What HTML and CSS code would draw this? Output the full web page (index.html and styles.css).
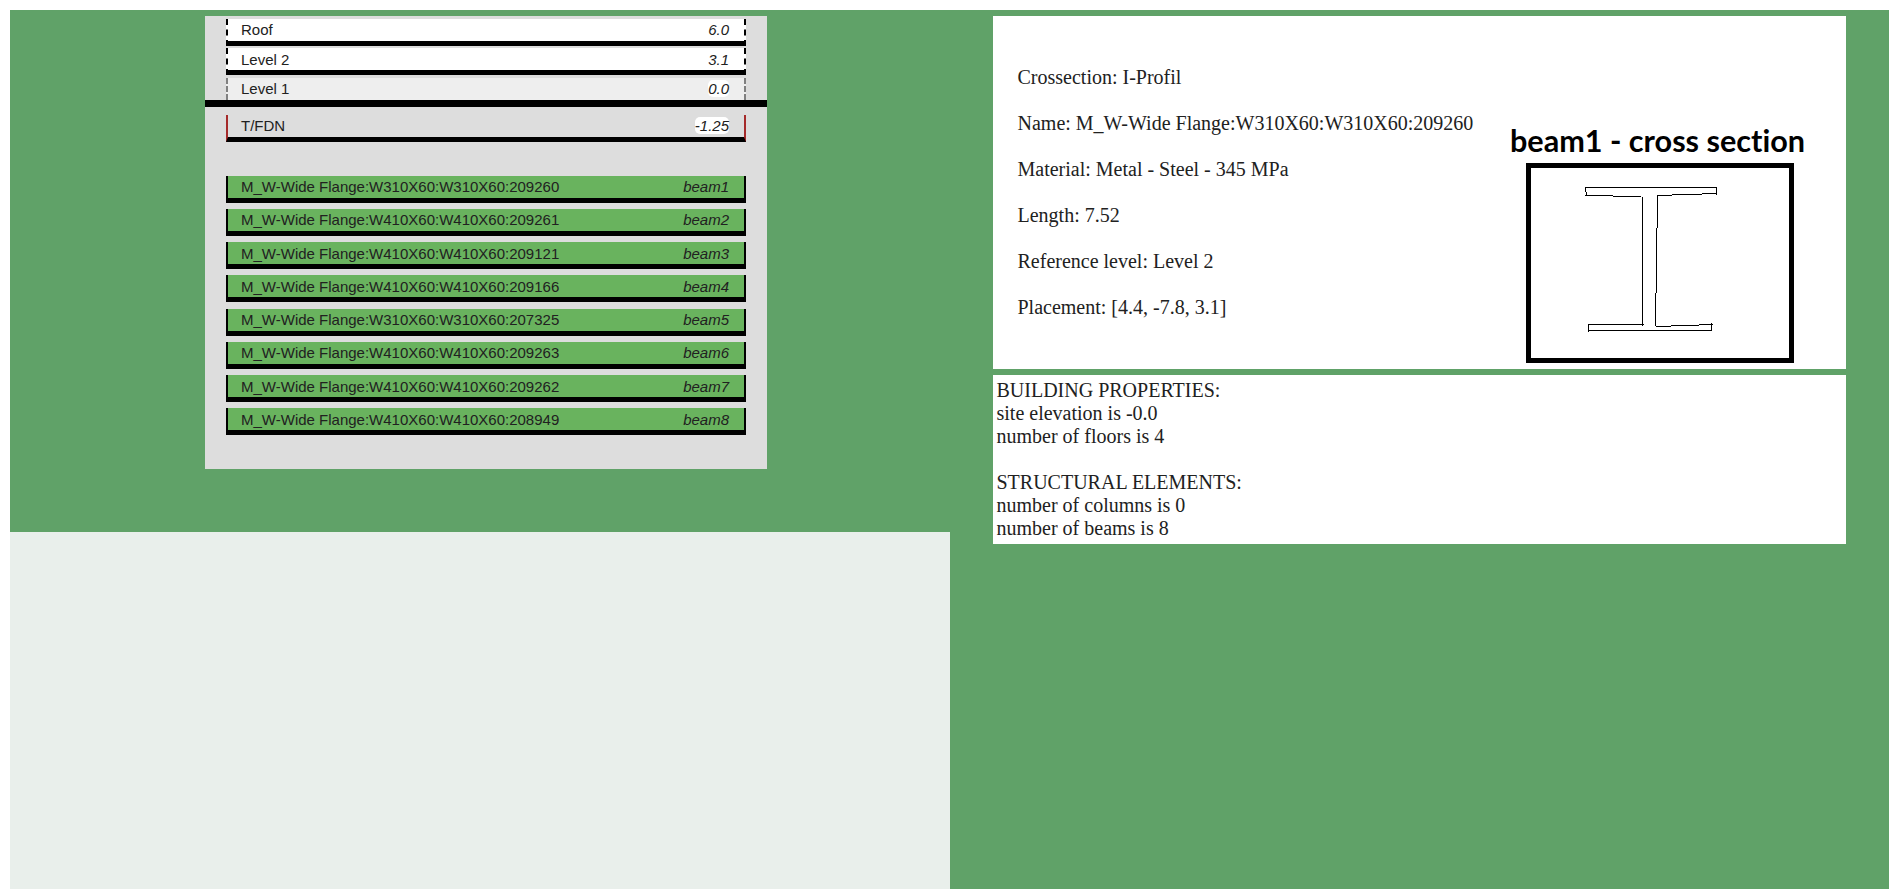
FILE: index.html
```
<!DOCTYPE html>
<html lang="en">
<head>
<meta charset="utf-8">
<title>Building overview</title>
<link rel="stylesheet" href="styles.css">
</head>
<body>
<main class="page">
  <section class="left">
    <div class="building">
      <div class="row level"><span>Roof</span><em>6.0</em></div>
      <div class="row level low"><span>Level 2</span><em>3.1</em></div>
      <div class="ground"><div class="row zero"><span>Level 1</span><em>0.0</em></div></div>
      <div class="row foundation"><span>T/FDN</span><em>-1.25</em></div>
      <div class="beams">
        <div class="row beam"><span>M_W-Wide Flange:W310X60:W310X60:209260</span><em>beam1</em></div>
        <div class="row beam"><span>M_W-Wide Flange:W410X60:W410X60:209261</span><em>beam2</em></div>
        <div class="row beam low"><span>M_W-Wide Flange:W410X60:W410X60:209121</span><em>beam3</em></div>
        <div class="row beam low"><span>M_W-Wide Flange:W410X60:W410X60:209166</span><em>beam4</em></div>
        <div class="row beam"><span>M_W-Wide Flange:W310X60:W310X60:207325</span><em>beam5</em></div>
        <div class="row beam"><span>M_W-Wide Flange:W410X60:W410X60:209263</span><em>beam6</em></div>
        <div class="row beam low"><span>M_W-Wide Flange:W410X60:W410X60:209262</span><em>beam7</em></div>
        <div class="row beam low"><span>M_W-Wide Flange:W410X60:W410X60:208949</span><em>beam8</em></div>
      </div>
    </div>
    <div class="canvas"></div>
  </section>
  <section class="right">
    <div class="details">
      <div class="facts">
        <div>Crossection: I-Profil</div>
        <div>Name: M_W-Wide Flange:W310X60:W310X60:209260</div>
        <div>Material: Metal - Steel - 345 MPa</div>
        <div>Length: 7.52</div>
        <div>Reference level: Level 2</div>
        <div>Placement: [4.4, -7.8, 3.1]</div>
      </div>
      <svg class="section" width="310" height="249" viewBox="0 0 310 249">
        <text class="section-title" x="10" y="32" textLength="295" lengthAdjust="spacingAndGlyphs">beam1 - cross section</text>
        <rect class="frame" x="28.5" y="45.5" width="263" height="195"/>
        <path class="profile" d="M85 67.5H217M85.5 67V72M86.5 72V75M85 75.5H113M113 76.5H141M216.5 67V75M202 73.5H216M172 74.5H202M157 75.5H172M142.5 77V206M157.5 75V108M156.5 108V173M155.5 173V206M88 204.5H144M88.5 204V212M88 210.5H212M211.5 203V211M199 204.5H213M171 205.5H199M156 206.5H171"/>
      </svg>
    </div>
    <div class="summary">BUILDING PROPERTIES:<br>site elevation is -0.0<br>number of floors is 4<br><br>STRUCTURAL ELEMENTS:<br>number of columns is 0<br>number of beams is 8</div>
  </section>
</main>
</body>
</html>
```
FILE: styles.css
```
* { box-sizing: border-box; }
body {
  margin: 0;
  padding: 10px 3px 5px 10px;
  height: 894px;
  background: #fff;
  color: #212121;
  font: 20px/23px "Liberation Serif", serif;
}
.page {
  display: flex;
  height: 879px;
  background: #60a268;
}
.left {
  display: flex;
  flex-direction: column;
  width: 940px;
}
.building {
  width: 562px;
  height: 453px;
  margin: 6px 0 63px 195px;
  padding-top: 3px;
  background: #ddd;
  font: 15px/17px "Liberation Sans", Arial, sans-serif;
}
.canvas {
  flex: 1;
  background: #e9efeb;
}
.row {
  display: flex;
  justify-content: space-between;
  width: 520px;
  height: 27px;
  margin-left: 21px;
  padding: 2px 15px 0 13px;
  border: 2px solid #000;
  border-top: 0;
  border-bottom-width: 5px;
}
.row.low { padding-top: 3px; }
.row em {
  height: 17px;
  border-radius: 5px;
}
.level {
  margin-bottom: 2px;
  background: #fff;
  border-left-style: dashed;
  border-right-style: dashed;
}
.level + .level { margin-bottom: 3px; }
.ground {
  border-bottom: 7px solid #000;
}
.zero {
  height: 22px;
  background: #eee;
  border: 2px dashed #808080;
  border-width: 0 2px;
}
.foundation {
  margin-top: 8px;
  border-left-color: #a52a2a;
  border-right-color: #a52a2a;
}
.zero em,
.foundation em { background: #fff; }
.beams { padding-top: 34px; }
.beam {
  margin-bottom: 6px;
  background: #69b35e;
}
.beam:nth-child(4) { margin-bottom: 7px; }
.right {
  width: 853px;
  margin: 6px 0 0 43px;
}
.details {
  display: flex;
  height: 353px;
  margin-bottom: 6px;
  background: #fff;
}
.facts {
  display: grid;
  align-content: start;
  gap: 23px;
  width: 507px;
  padding: 50px 0 0 24.5px;
}
.section { margin-top: 104px; }
.section-title {
  font: bold 31px Lato, sans-serif;
  font-variant-ligatures: none;
  fill: #000;
}
.frame {
  fill: none;
  stroke: #000;
  stroke-width: 5px;
}
.profile {
  fill: none;
  stroke: #000;
  stroke-width: 1px;
  shape-rendering: crispEdges;
}
.summary {
  height: 169px;
  padding: 4px 4px 4px 3.5px;
  background: #fff;
}
```
